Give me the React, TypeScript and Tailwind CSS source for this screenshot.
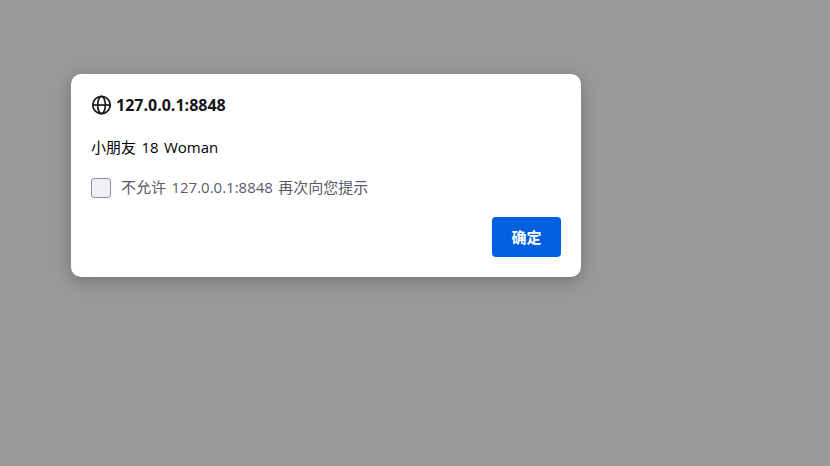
export default function App() {
  return (
    <div className="h-[466px] w-[830px] overflow-hidden bg-[#99999c] pl-[71px] pt-[74px] font-['Open_Sans','Noto_Sans_CJK_SC',sans-serif]">
      <div className="flex h-[203px] w-[510px] flex-col rounded-[10px] bg-white px-5 pt-5 shadow-[0_4px_16px_rgba(0,0,0,0.25)]">
        <div className="flex h-[21px] items-center gap-[5px]">
          <svg width="20" height="20" viewBox="0 0 20 20" fill="none" stroke="#1a1a1a" strokeWidth="1.7">
            <circle cx="10.5" cy="10" r="8.7" />
            <ellipse cx="10.5" cy="10" rx="3.8" ry="8.7" />
            <path d="M1.8 10h17.4" />
          </svg>
          <span className="text-[16px] font-bold text-[#15141a]">127.0.0.1:8848</span>
        </div>
        <div className="mt-[22px] text-[15px] leading-[20px] text-black [word-spacing:1.5px]">小朋友 18 Woman</div>
        <div className="mt-[20px] flex items-center gap-[10px]">
          <div className="h-5 w-5 rounded-[3px] border border-[#8f8f9d] bg-[#f0f0f4]" />
          <span className="mb-[2px] text-[15px] leading-[20px] text-[#5b5b66] [word-spacing:1.5px]">不允许 127.0.0.1:8848 再次向您提示</span>
        </div>
        <div className="mt-[18px] flex justify-end">
          <button className="h-10 w-[69px] rounded-[4px] bg-[#0060df] text-[15px] font-bold text-white">确定</button>
        </div>
      </div>
    </div>
  );
}
